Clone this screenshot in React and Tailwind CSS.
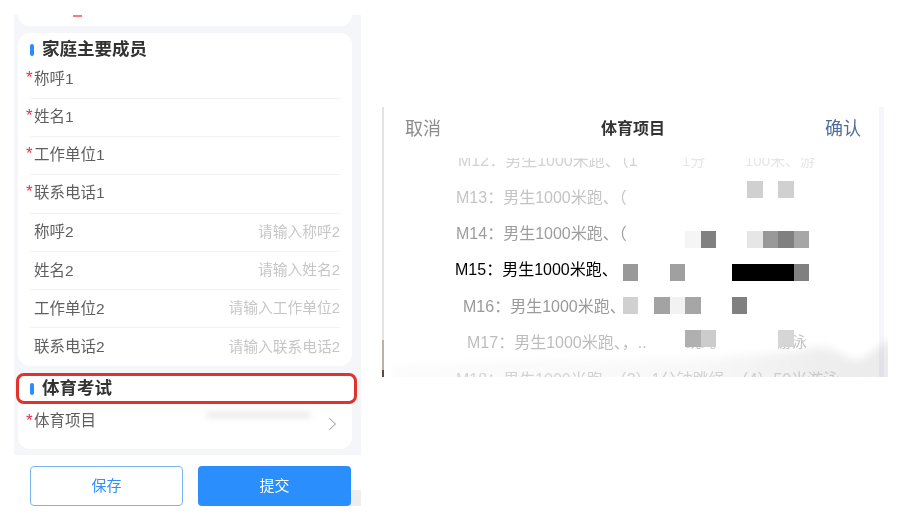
const font = "font-['Liberation_Sans','Noto_Sans_CJK_SC',sans-serif]";

function Row({ label, placeholder, required, last }) {
  return (
    <div className={`relative mx-3 flex h-[38.4px] items-center justify-between pl-1 ${last ? "" : "border-b border-[#f1f2f4]"}`}>
      {required && <span className="absolute -left-[4px] top-[7px] text-[17px] leading-[20px] text-[#ee2b4b]">*</span>}
      <span className={`text-[15.5px] text-[#5f5f5f] ${required ? "-translate-y-px" : ""}`}>{label}</span>
      {placeholder && <span className="text-[14.75px] text-[#c6c6c6]">{placeholder}</span>}
    </div>
  );
}

function Heading({ children }) {
  return (
    <div className="flex items-center gap-[8px] pl-3">
      <span className="h-[12px] w-[4px] rounded-full bg-[#2a8efc]" />
      <span className="text-[17.5px] font-bold leading-none text-[#333]">{children}</span>
    </div>
  );
}

const blocks = [
  "left-[747px] top-[181px] w-[16px] bg-[#d0d0d0]",
  "left-[778px] top-[181px] w-[16px] bg-[#d0d0d0]",
  "left-[685px] top-[231px] w-[16px] bg-[#f5f5f5]",
  "left-[701px] top-[231px] w-[15px] bg-[#808080]",
  "left-[747px] top-[231px] w-[16px] bg-[#e6e6e6]",
  "left-[763px] top-[231px] w-[15px] bg-[#999999]",
  "left-[778px] top-[231px] w-[16px] bg-[#808080]",
  "left-[794px] top-[231px] w-[15px] bg-[#a6a6a6]",
  "left-[623px] top-[264px] w-[15px] bg-[#999999]",
  "left-[670px] top-[264px] w-[15px] bg-[#a0a0a0]",
  "left-[732px] top-[264px] w-[62px] bg-black",
  "left-[794px] top-[264px] w-[15px] bg-[#808080]",
  "left-[623px] top-[297px] w-[15px] bg-[#d0d0d0]",
  "left-[654px] top-[297px] w-[16px] bg-[#a3a3a3]",
  "left-[670px] top-[297px] w-[15px] bg-[#f2f2f2]",
  "left-[685px] top-[297px] w-[16px] bg-[#a6a6a6]",
  "left-[732px] top-[297px] w-[15px] bg-[#808080]",
  "left-[685px] top-[330px] w-[16px] bg-[#b0b0b0]",
  "left-[701px] top-[330px] w-[15px] bg-[#cccccc]",
  "left-[778px] top-[330px] w-[16px] bg-[#d6d6d6]",
];

const options = [
  { text: "M12：男生1000米跑、（1", cls: "pl-[74px] text-[#d2d2d2]" },
  { text: "M13：男生1000米跑、（", cls: "pl-[72px] text-[#c4c4c4]" },
  { text: "M14：男生1000米跑、（", cls: "pl-[72px] text-[#9d9d9d]" },
  { text: "M15：男生1000米跑、", cls: "pl-[71px] text-black" },
  { text: "M16：男生1000米跑、", cls: "pl-[79px] text-[#9a9a9a]" },
  { text: "M17：男生1000米跑、，..", cls: "pl-[83px] text-[#bdbdbd]" },
  { text: "M18：男生1000米跑、（2）1分钟跳绳、（4）50米游泳", cls: "pl-[72px] text-[#d8d8d8]" },
];

export default function App() {
  return (
    <div className={`relative flex h-[526px] w-[901px] items-start overflow-hidden bg-white ${font}`}>
      {/* form phone */}
      <div className="relative ml-[14px] mt-[15px] flex w-[347px] flex-col bg-[#f4f6f9] blur-[0.4px]">
        <div className="flex flex-col gap-[7px] pl-1 pr-[9px]">
          <div className="relative h-[11px] rounded-b-xl bg-white">
            <span className="absolute left-[55px] top-0 h-[2px] w-[9px] bg-[#f08080]" />
          </div>
          <div className="flex h-[333px] flex-col rounded-xl bg-white pt-[9px]">
            <div className="mb-[3px] flex h-[16px] items-center"><Heading>家庭主要成员</Heading></div>
            <Row required label="称呼1" />
            <Row required label="姓名1" />
            <Row required label="工作单位1" />
            <Row required label="联系电话1" />
            <Row label="称呼2" placeholder="请输入称呼2" />
            <Row label="姓名2" placeholder="请输入姓名2" />
            <Row label="工作单位2" placeholder="请输入工作单位2" />
            <Row last label="联系电话2" placeholder="请输入联系电话2" />
          </div>
          <div>
            <div className="-ml-[2px] -mr-[5px] flex h-[31px] items-center rounded-lg border-[3px] border-[#e1322d] bg-white">
              <div className="-ml-px"><Heading>体育考试</Heading></div>
            </div>
            <div className="relative flex h-[45px] items-start justify-between rounded-b-xl bg-white pl-4 pr-[15px]">
              <span className="absolute left-[8px] top-[7px] text-[17px] leading-[20px] text-[#ee2b4b]">*</span>
              <span className="mt-[5px] text-[15.5px] text-[#5f5f5f]">体育项目</span>
              <span className="absolute left-[188px] top-[8px] h-[6px] w-[105px] rounded-full bg-[#e9e9e9] blur-[3px]" />
              <svg className="mt-[13px]" width="9" height="14" viewBox="0 0 9 14" fill="none" stroke="#8f8f8f" strokeWidth="1">
                <path d="M1.5 1.5 7.5 7 1.5 12.5" />
              </svg>
            </div>
          </div>
        </div>
        <div className="mt-[6px] flex h-[51px] gap-[15px] bg-white pl-4 pr-[10px] pt-[11px]">
          <button className="h-[40px] w-[153px] rounded border border-[#7ab5f0] bg-white text-[15px] text-[#2f8fff]">保存</button>
          <button className="h-[40px] w-[153px] rounded bg-[#2a8efc] text-[15px] text-white">提交</button>
        </div>
        <span className="absolute bottom-0 right-0 h-[16px] w-[10px] bg-[#eeeeee]" />
      </div>

      {/* picker */}
      <div className="ml-[21px] mt-[107px] flex h-[270px] w-[502px] flex-col overflow-hidden border-l-2 border-[#e3e3e3] bg-white blur-[0.4px]">
        <div className="flex h-[51px] shrink-0 items-center justify-between pb-[7px] pl-[21px] pr-[23px]">
          <span className="text-[18px] text-[#8c8c8c]">取消</span>
          <span className="text-[16px] font-bold text-[#333]">体育项目</span>
          <span className="text-[18px] text-[#4f6d9c]">确认</span>
        </div>
        <div className="relative min-h-0 flex-1 overflow-hidden">
          <div className="-mt-[15px]">
            {options.map((o) => (
              <div key={o.text} className={`flex h-[36.4px] items-center whitespace-nowrap text-[16px] ${o.cls}`}>{o.text}</div>
            ))}
          </div>
          <span className="absolute left-[298px] top-[-8px] whitespace-nowrap text-[15px] text-[#e6e6e6]">1分</span>
          <span className="absolute left-[361px] top-[-8px] whitespace-nowrap text-[15px] text-[#e6e6e6]">100米、游</span>
          <span className="absolute left-[302px] top-[173px] whitespace-nowrap text-[15px] text-[#c4c4c4]">跳绳</span>
          <span className="absolute left-[393px] top-[173px] whitespace-nowrap text-[15px] text-[#c4c4c4]">游泳</span>
        </div>
      </div>

      {/* mosaic censoring and scenery lying over the picker */}
      {blocks.map((b) => (
        <span key={b} className={`absolute h-[17px] ${b}`} />
      ))}
      <span className="absolute left-[879px] top-[107px] h-[270px] w-[5px] bg-[#f4f6fb]" />
      <span className="absolute left-[382px] top-[340px] h-[37px] w-[2px] bg-[#b9b2ac]" />
      <span className="absolute left-[382px] top-[370px] h-[7px] w-[2px] bg-[#5e4c40]" />
      <svg className="absolute left-[382px] top-[330px] mix-blend-multiply" width="506" height="47" viewBox="0 0 506 47">
        <defs>
          <filter id="mist"><feGaussianBlur stdDeviation="4" /></filter>
          <linearGradient id="mistfade" x1="0" x2="1" y1="0" y2="0">
            <stop offset="0" stopColor="#fcfcfc" />
            <stop offset="0.6" stopColor="#f8f8f8" />
            <stop offset="0.85" stopColor="#eeeeee" />
            <stop offset="1" stopColor="#eaeaea" />
          </linearGradient>
          <clipPath id="mistclip"><rect width="506" height="47" /></clipPath>
        </defs>
        <g clipPath="url(#mistclip)">
          <path d="M10 60 L10 36 C120 28 300 36 420 20 C440 12 455 22 472 30 C482 32 492 18 512 8 L520 60 Z" fill="url(#mistfade)" filter="url(#mist)" />
        </g>
      </svg>
    </div>
  );
}
